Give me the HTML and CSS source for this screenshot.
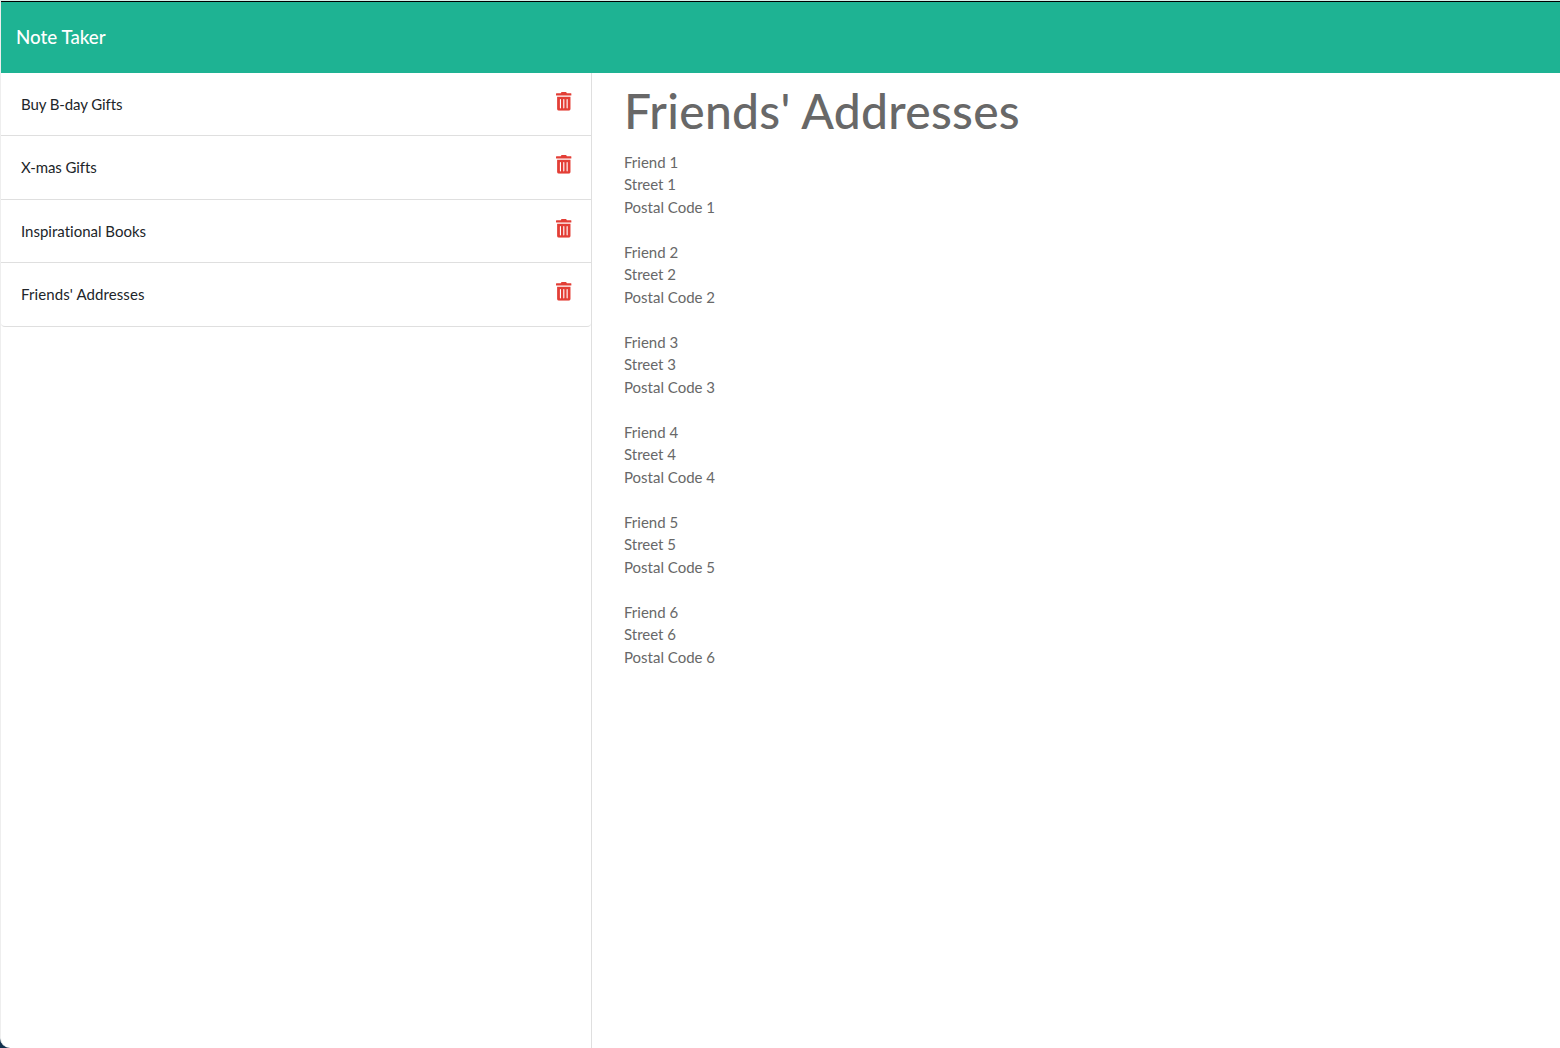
FILE: index.html
```html
<!DOCTYPE html>
<html lang="en">
<head>
<meta charset="utf-8">
<title>Note Taker</title>
<link rel="stylesheet" href="styles.css">
</head>
<body>
<svg class="sprite" aria-hidden="true">
  <symbol id="trash" viewBox="0 0 448 512" preserveAspectRatio="none"><path d="M32 464a48 48 0 0 0 48 48h288a48 48 0 0 0 48-48V128H32zm272-256a16 16 0 0 1 32 0v224a16 16 0 0 1-32 0zm-96 0a16 16 0 0 1 32 0v224a16 16 0 0 1-32 0zm-96 0a16 16 0 0 1 32 0v224a16 16 0 0 1-32 0zM432 32H312l-9.400-18.700A24 24 0 0 0 281.100 0H166.800a23.700 23.700 0 0 0-21.400 13.300L136 32H16A16 16 0 0 0 0 48v32a16 16 0 0 0 16 16h416a16 16 0 0 0 16-16V48a16 16 0 0 0-16-16z"/></symbol>
</svg>
<div class="app">
  <header class="navbar">Note Taker</header>
  <main class="content">
    <ul class="notes">
      <li class="note"><span class="tight">Buy B-day Gifts</span><svg class="icon"><use href="#trash"/></svg></li>
      <li class="note"><span class="tight">X-mas Gifts</span><svg class="icon"><use href="#trash"/></svg></li>
      <li class="note"><span>Inspirational Books</span><svg class="icon"><use href="#trash"/></svg></li>
      <li class="note"><span class="wide">Friends' Addresses</span><svg class="icon"><use href="#trash"/></svg></li>
    </ul>
    <article class="detail">
      <h1 class="title">Friends' Addresses</h1>
      <div class="text">Friend 1
Street 1
Postal Code 1

Friend 2
Street 2
Postal Code 2

Friend 3
Street 3
Postal Code 3

Friend 4
Street 4
Postal Code 4

Friend 5
Street 5
Postal Code 5

Friend 6
Street 6
Postal Code 6</div>
    </article>
  </main>
</div>
</body>
</html>
```

FILE: styles.css
```css
* { box-sizing: border-box; }
body { margin: 0; background: #12304d; font: 15px/22.5px Lato, sans-serif; font-variant-ligatures: none; }
.sprite { display: none; }
.app { height: 100vh; display: flex; flex-direction: column; background: #fff; border-top: 1px solid #d5efe8; border-left: 1px solid #eee; border-bottom-left-radius: 10px; overflow: hidden; }
.navbar { height: 72px; flex: none; padding: 0 15px; display: flex; align-items: center; background: #1eb393; border-top: 1px solid #000; color: #fff; font-size: 18.750px; font-weight: 500; }
.content { flex: 1; display: flex; }
.notes { width: 591px; margin: 0; padding: 0; list-style: none; border-right: 1px solid #dfdfdf; }
.note { height: 63.450px; padding: 19px 19.400px 0 20px; display: flex; justify-content: space-between; border-bottom: 1px solid #dfdfdf; color: #212529; line-height: 24px; }
.note:last-child { border-radius: 0 0 4px 4px; }
.tight { letter-spacing: -0.1px; }
.wide { letter-spacing: 0.1px; }
.icon { width: 15.600px; height: 18.750px; fill: #e33e36; }
.detail { padding: 9px 32px; color: #686868; }
.title { margin: 0 0 10.900px; font-size: 48px; line-height: 58px; font-weight: 500; letter-spacing: 0.270px; }
.text { white-space: pre-line; }
```
